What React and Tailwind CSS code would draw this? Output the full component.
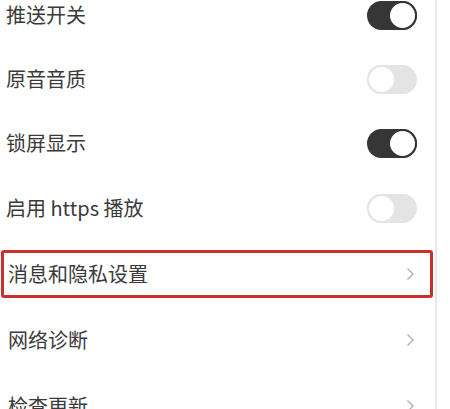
import React from "react";

const Toggle = ({ on }) => (
  <div
    className={`w-[50px] h-[29px] rounded-full flex items-center ${
      on ? "bg-[#363636] justify-end" : "bg-[#e4e4e4] justify-start"
    }`}
  >
    <div
      className={`w-[29px] h-[29px] rounded-full bg-white border-2 ${
        on ? "border-[#363636]" : "border-[#e4e4e4]"
      }`}
    ></div>
  </div>
);

const Chevron = () => (
  <svg width="9" height="14" viewBox="0 0 9 14" className="mr-[1px]">
    <path d="M1.5 1.5 L7 7 L1.5 12.5" fill="none" stroke="#b0b0b0" strokeWidth="1.4" />
  </svg>
);

const App = () => {
  const toggles = [
    { id: 1, title: "推送开关", on: true },
    { id: 2, title: "原音音质", on: false },
    { id: 3, title: "锁屏显示", on: true },
    { id: 4, title: "启用 https 播放", on: false },
  ];

  const links = [
    { id: 5, title: "消息和隐私设置", marked: true },
    { id: 6, title: "网络诊断" },
    { id: 7, title: "检查更新" },
  ];

  return (
    <div
      className="w-[450px] h-[409px] overflow-hidden bg-white flex text-[#3a3a3a]"
      style={{ fontFamily: '"Noto Sans CJK SC", "Noto Sans", sans-serif' }}
    >
      <div className="w-[435px] -mt-[17px]">
        {/* switch rows */}
        {toggles.map((item, i) => (
          <div
            key={item.id}
            className={`${i === 3 ? "h-[66px]" : "h-[64px]"} flex items-center justify-between pl-[6px] pr-[18px]`}
          >
            <span className="text-[20px] leading-none">{item.title}</span>
            <Toggle on={item.on} />
          </div>
        ))}

        {/* link rows */}
        {links.map((item) => (
          <div key={item.id} className="h-[66px] flex items-center pl-[1px] pr-[2px]">
            <div
              className={`w-full h-[48px] flex items-center justify-between pl-[4px] pr-[14px] rounded-[3px] border-[3px] ${
                item.marked ? "border-[#c9302c]" : "border-transparent"
              }`}
            >
              <span className="text-[20px] leading-none">{item.title}</span>
              <Chevron />
            </div>
          </div>
        ))}
      </div>
      <div className="w-[2px] h-full bg-[#e8e8e8]"></div>
    </div>
  );
};

export default App;
